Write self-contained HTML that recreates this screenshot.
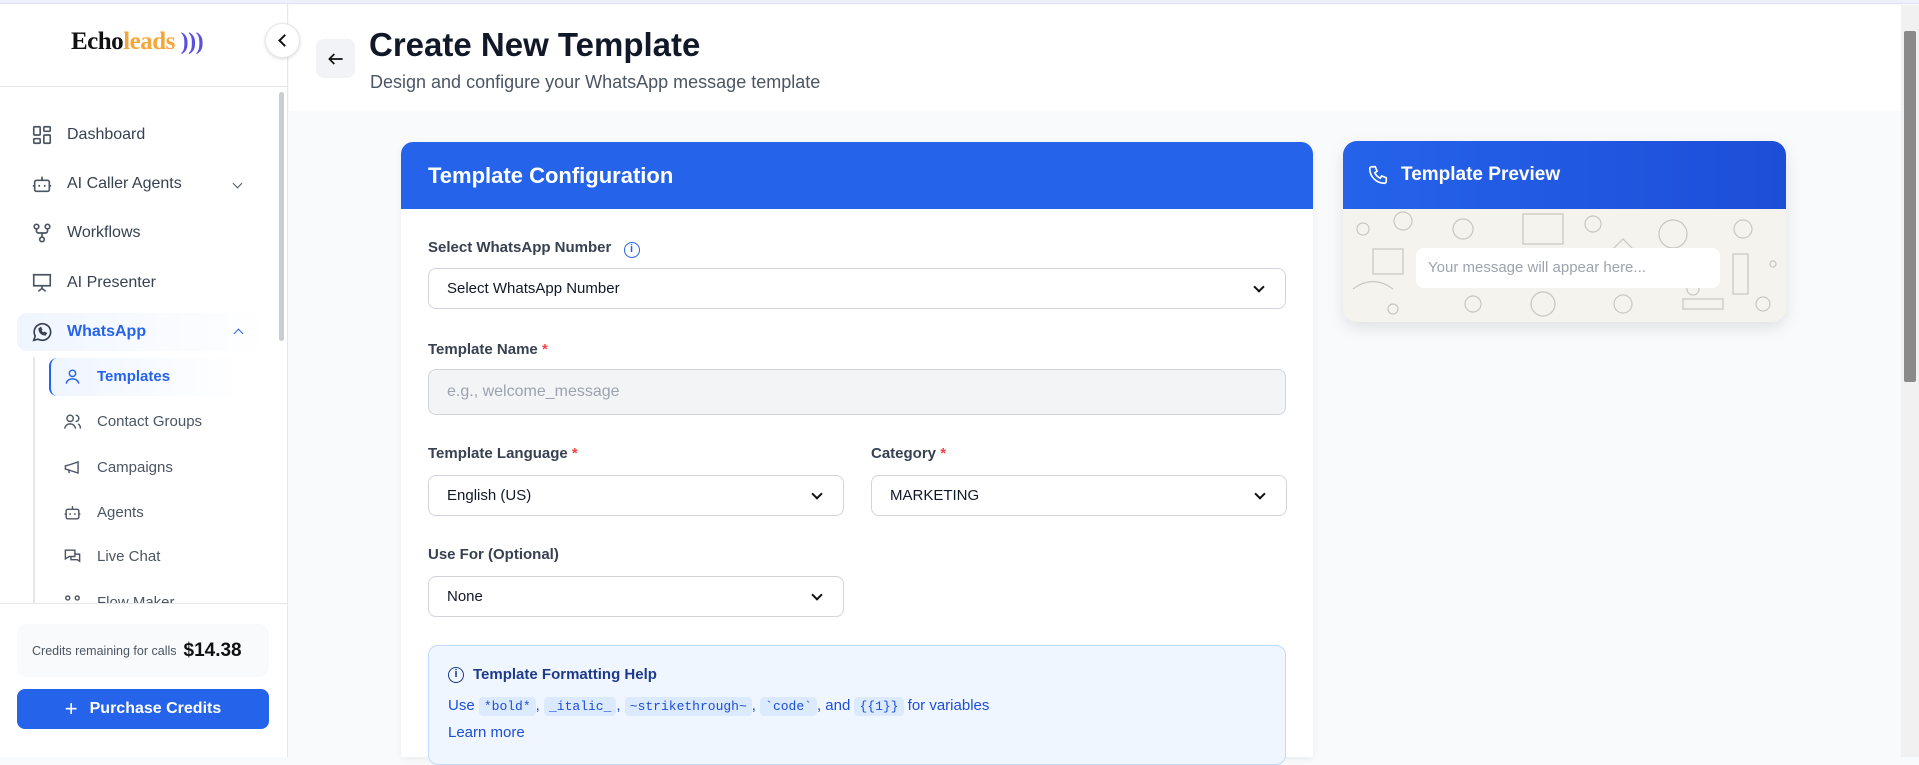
<!DOCTYPE html>
<html><head><meta charset="utf-8"><style>
*{box-sizing:border-box;margin:0;padding:0}
body{width:1919px;height:757px;overflow:hidden;font-family:"Liberation Sans",sans-serif;background:#f8fafc;position:relative;color:#1f2937}
.abs{position:absolute}
.topline{left:0;top:0;width:1919px;height:4px;background:#eef0fb;border-bottom:1px solid #dfe2f4}
.side{left:0;top:4px;width:288px;height:753px;background:#fff;border-right:1px solid #e5e7eb}
.nav{position:absolute;left:31px;font-size:16px;color:#374151;display:flex;align-items:center}
.nav svg{width:22px;height:22px;margin-right:14px;stroke:#4b5563;fill:none;stroke-width:1.8}
.sub{position:absolute;left:63px;font-size:15px;color:#4b5563;display:flex;align-items:center}
.sub svg{width:19px;height:19px;margin-right:15px;stroke:#4b5563;fill:none;stroke-width:1.8}
.lbl{position:absolute;font-size:15px;font-weight:bold;color:#374151}
.lbl .r{color:#ef4444}
.sel{position:absolute;height:41px;border:1px solid #d1d5db;border-radius:8px;background:#fff;font-size:15px;color:#111827;padding-left:18px;display:flex;align-items:center}
.sel:after{content:"";position:absolute;right:22px;top:14px;width:6px;height:6px;border-right:2px solid #111;border-bottom:2px solid #111;transform:rotate(45deg)}
.sel.n:after{display:none}
code{font-family:"Liberation Mono",monospace;background:#dbeafe;border-radius:4px;padding:2px 5px;font-size:13px;color:#1d4ed8}
</style></head><body>
<div class="abs topline"></div>
<div class="abs side">
  <div class="abs" style="left:0;top:82px;width:287px;border-top:1px solid #e5e7eb"></div>
  <div class="abs" style="left:71px;top:24px;font-family:'Liberation Serif',serif;font-weight:bold;font-size:25px;letter-spacing:-0.5px"><span style="color:#111">Echo</span><span style="color:#f5a63b">leads</span> <span style="color:#5b4fe0;font-size:24px">)))</span></div>
  <div class="abs" style="left:279px;top:88px;width:5px;height:249px;background:#c7ccd6;border-radius:3px"></div>
  <div class="nav" style="top:120px"><svg viewBox="0 0 24 24"><rect x="3" y="3" width="7" height="9" rx="1"/><rect x="14" y="3" width="7" height="5" rx="1"/><rect x="14" y="12" width="7" height="9" rx="1"/><rect x="3" y="16" width="7" height="5" rx="1"/></svg>Dashboard</div>
  <div class="nav" style="top:169px"><svg viewBox="0 0 24 24"><rect x="4" y="8" width="16" height="12" rx="2"/><path d="M12 8V4M2 14h2M20 14h2M9 13v2M15 13v2"/></svg>AI Caller Agents</div>
  <div class="abs" style="left:234px;top:176px;width:7px;height:7px;border-right:1.6px solid #4b5563;border-bottom:1.6px solid #4b5563;transform:rotate(45deg)"></div>
  <div class="nav" style="top:218px"><svg viewBox="0 0 24 24"><circle cx="6" cy="5" r="2.5"/><circle cx="18" cy="5" r="2.5"/><circle cx="12" cy="19" r="2.5"/><path d="M6 8v2a2 2 0 002 2h8a2 2 0 002-2V8M12 12v4"/></svg>Workflows</div>
  <div class="nav" style="top:268px"><svg viewBox="0 0 24 24"><path d="M2 3h20M3 3v12h18V3M12 15v3M8 21l4-3 4 3"/></svg>AI Presenter</div>
  <div class="abs" style="left:17px;top:309px;width:250px;height:38px;border-radius:10px;background:linear-gradient(90deg,#eff5ff,#fff)"></div>
  <div class="nav" style="top:317px;color:#2563eb;font-weight:bold;left:31px"><svg viewBox="0 0 24 24" style="stroke:#374151"><path d="M3 21l1.6-4.6A9 9 0 1112 21a9 9 0 01-4.4-1.2z"/><path d="M9 8.5c0 3.5 2.5 6.5 6.5 6.5l1-1.5-2-1-1 1c-1-.5-2.5-2-3-3l1-1-1-2z"/></svg>WhatsApp</div>
  <div class="abs" style="left:235px;top:326px;width:7px;height:7px;border-left:1.6px solid #2563eb;border-top:1.6px solid #2563eb;transform:rotate(45deg)"></div>
  <div class="abs" style="left:33px;top:353px;width:2px;height:250px;background:#e5e7eb"></div>
  <div class="abs" style="left:49px;top:354px;width:190px;height:38px;border-left:2px solid #2563eb;border-radius:8px;background:linear-gradient(90deg,#eff5ff,#fff)"></div>
  <div class="sub" style="top:363px;color:#2563eb;font-weight:bold"><svg viewBox="0 0 24 24" style="stroke:#2563eb"><circle cx="12" cy="8" r="4"/><path d="M4 21c1-4 4-6 8-6s7 2 8 6"/></svg>Templates</div>
  <div class="sub" style="top:408px"><svg viewBox="0 0 24 24"><circle cx="9" cy="8" r="4"/><path d="M2 21c1-4 3.5-6 7-6s6 2 7 6M16 4a4 4 0 010 8M19 15c2 1 3 3 3 6"/></svg>Contact Groups</div>
  <div class="sub" style="top:454px"><svg viewBox="0 0 24 24"><path d="M3 10v4l4 1 12 4V5L7 9zM7 15l1 4"/></svg>Campaigns</div>
  <div class="sub" style="top:499px"><svg viewBox="0 0 24 24"><rect x="4" y="8" width="16" height="12" rx="2"/><path d="M12 8V4M2 14h2M20 14h2M9 13v2M15 13v2"/></svg>Agents</div>
  <div class="sub" style="top:543px"><svg viewBox="0 0 24 24"><path d="M3 4h12v8H8l-5 3zM15 9h6v9l-3-2h-8v-4"/></svg>Live Chat</div>
  <div class="sub" style="top:590px;height:13px;overflow:hidden;align-items:flex-start"><svg viewBox="0 0 24 24"><circle cx="6" cy="5" r="2.5"/><circle cx="18" cy="5" r="2.5"/></svg>Flow Maker</div>
  <div class="abs" style="left:0;top:599px;width:287px;height:154px;background:#fff;border-top:1px solid #e5e7eb"></div>
  <div class="abs" style="left:17px;top:620px;width:252px;height:53px;background:#f8fafc;border-radius:10px;display:flex;align-items:center;padding-left:15px;font-size:12.5px;color:#4b5563">Credits remaining for calls <b style="font-size:19px;color:#111;margin-left:7px">$14.38</b></div>
  <div class="abs" style="left:17px;top:685px;width:252px;height:40px;background:#2563eb;border-radius:8px;color:#fff;font-weight:bold;font-size:16px;display:flex;align-items:center;justify-content:center"><span style="font-size:22px;font-weight:normal;margin-right:12px">+</span>Purchase Credits</div>
</div>
<div class="abs" style="left:289px;top:5px;width:1612px;height:106px;background:#fff"></div>
<div class="abs" style="left:265px;top:23px;width:35px;height:35px;border-radius:50%;background:#fff;border:1px solid #e5e7eb;box-shadow:0 1px 3px rgba(0,0,0,.15)"></div>
<div class="abs" style="left:280px;top:36px;width:9px;height:9px;border-left:2px solid #111;border-bottom:2px solid #111;transform:rotate(45deg)"></div>
<div class="abs" style="left:316px;top:39px;width:39px;height:39px;border-radius:8px;background:#f1f3f6;display:flex;align-items:center;justify-content:center"><svg width="20" height="20" viewBox="0 0 24 24" fill="none" stroke="#111" stroke-width="2"><path d="M20 12H4M10 6l-6 6 6 6"/></svg></div>
<div class="abs" style="left:369px;top:26px;font-size:33px;font-weight:bold;color:#111827">Create New Template</div>
<div class="abs" style="left:370px;top:72px;font-size:18px;color:#4b5563">Design and configure your WhatsApp message template</div>

<div class="abs" style="left:401px;top:142px;width:912px;height:615px;background:#fff;border-radius:12px 12px 0 0;box-shadow:0 2px 8px rgba(0,0,0,.06)"></div>
<div class="abs" style="left:401px;top:142px;width:912px;height:67px;background:#2563eb;border-radius:12px 12px 0 0;color:#fff;font-size:22px;font-weight:bold;padding:21px 0 0 27px">Template Configuration</div>
<div class="lbl" style="left:428px;top:239px">Select WhatsApp Number <span style="display:inline-block;width:16px;height:16px;border:1.5px solid #2563eb;border-radius:50%;color:#2563eb;font-size:11px;text-align:center;line-height:13px;margin-left:8px">i</span></div>
<div class="sel" style="left:428px;top:268px;width:858px">Select WhatsApp Number</div>
<div class="lbl" style="left:428px;top:341px">Template Name <span class="r">*</span></div>
<div class="sel n" style="left:428px;top:369px;width:858px;height:46px;background:#f3f4f6;color:#9ca3af;font-size:16px">e.g., welcome_message</div>
<div class="lbl" style="left:428px;top:445px">Template Language <span class="r">*</span></div>
<div class="sel" style="left:428px;top:475px;width:416px">English (US)</div>
<div class="lbl" style="left:871px;top:445px">Category <span class="r">*</span></div>
<div class="sel" style="left:871px;top:475px;width:416px">MARKETING</div>
<div class="lbl" style="left:428px;top:546px">Use For (Optional)</div>
<div class="sel" style="left:428px;top:576px;width:416px">None</div>
<div class="abs" style="left:428px;top:645px;width:858px;height:120px;background:#eff6ff;border:1px solid #bfdbfe;border-radius:10px"></div>
<div class="abs" style="left:448px;top:666px;font-size:15px;font-weight:bold;color:#1e3a8a;display:flex;align-items:center"><span style="display:inline-block;width:16px;height:16px;border:1.5px solid #1e3a8a;border-radius:50%;font-size:11px;text-align:center;line-height:13px;margin-right:9px">i</span>Template Formatting Help</div>
<div class="abs" style="left:448px;top:697px;font-size:15px;color:#1d4ed8">Use <code>*bold*</code>, <code>_italic_</code>, <code>~strikethrough~</code>, <code>`code`</code>, and <code>{{1}}</code> for variables</div>
<div class="abs" style="left:448px;top:724px;font-size:15px;color:#1d4ed8">Learn more</div>

<div class="abs" style="left:1343px;top:141px;width:443px;height:181px;border-radius:14px;overflow:hidden;box-shadow:0 6px 16px rgba(0,0,0,.1);background:#f5f3ee">
  <div style="height:68px;background:linear-gradient(90deg,#2563eb,#1d4ed8);color:#fff;font-size:19px;font-weight:bold;padding:23px 0 0 58px;position:relative">Template Preview
    <svg style="position:absolute;left:24px;top:23px" width="22" height="22" viewBox="0 0 24 24" fill="none" stroke="#fff" stroke-width="1.8"><path d="M5 3h4l2 5-2.5 1.5a11 11 0 006 6L16 13l5 2v4a2 2 0 01-2 2A16 16 0 013 5a2 2 0 012-2z"/></svg></div>
  <svg width="443" height="113" style="position:absolute;left:0;top:68px" fill="none" stroke="#c9c7c0" stroke-width="1.2">
    <circle cx="20" cy="20" r="6"/><circle cx="60" cy="12" r="9"/><rect x="30" y="40" width="30" height="25"/><path d="M10 80q20-15 40 0"/><circle cx="120" cy="20" r="10"/><circle cx="170" cy="50" r="7"/><rect x="180" y="5" width="40" height="30"/><circle cx="250" cy="15" r="8"/><path d="M270 40l10-10 10 10"/><circle cx="330" cy="25" r="14"/><circle cx="400" cy="20" r="9"/><rect x="390" y="45" width="15" height="40"/><circle cx="130" cy="95" r="8"/><circle cx="200" cy="95" r="12"/><circle cx="280" cy="95" r="9"/><circle cx="350" cy="80" r="6"/><path d="M340 90h40v10h-40z"/><circle cx="420" cy="95" r="7"/><circle cx="90" cy="60" r="4"/><circle cx="240" cy="60" r="3"/><circle cx="310" cy="60" r="3"/><circle cx="430" cy="55" r="3"/><circle cx="50" cy="100" r="5"/>
  </svg>
  <div style="position:absolute;left:73px;top:107px;width:304px;height:40px;background:#fff;border-radius:8px;font-size:15px;color:#9ca3af;padding:11px 0 0 12px">Your message will appear here...</div>
</div>
<div class="abs" style="left:1901px;top:5px;width:18px;height:752px;background:#f1f1f1"></div>
<div class="abs" style="left:1904px;top:31px;width:12px;height:351px;background:#8a8a8a;border-radius:2px"></div>
</body></html>
